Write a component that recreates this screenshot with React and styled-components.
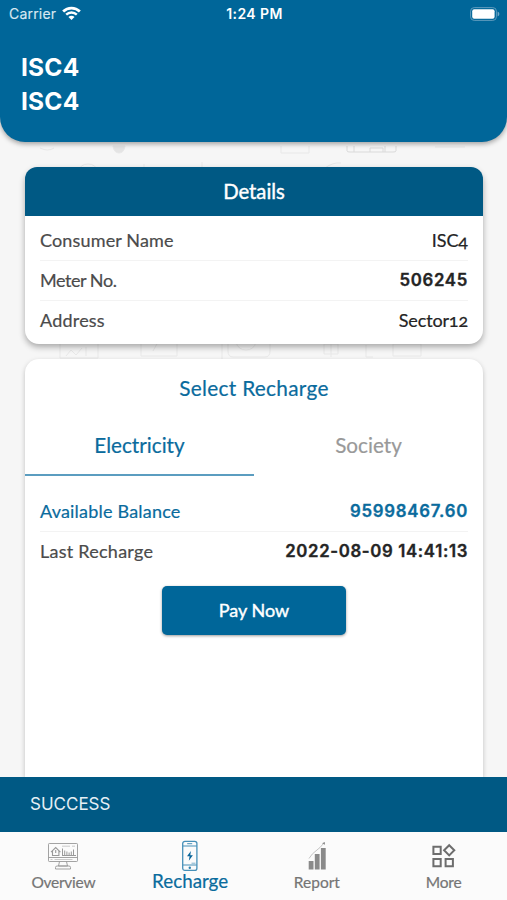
import React from "react";
import styled, { createGlobalStyle } from "styled-components";

const GlobalStyle = createGlobalStyle`
  * {
    box-sizing: border-box;
  }

  body {
    margin: 0;
    font-family: Lato, "Open Sans", sans-serif;
    font-variant-numeric: oldstyle-nums;
    background: #f6f6f6;
  }
`;

const details = [
  { label: "Consumer Name", value: "ISC4", labelTrack: 0.15, valueTrack: -0.1 },
  { label: "Meter No.", value: "506245", numeric: true, labelTrack: -0.45, valueTrack: 0.7 },
  { label: "Address", value: "Sector12", labelTrack: 0.2, valueTrack: -0.15 },
];

const WifiIcon = () => (
  <svg width="19" height="15" viewBox="0 0 20 15" fill="none" stroke="#fff">
    <path d="M1.2 5.4a12.6 12.6 0 0 1 17.6 0" strokeWidth="2.9" />
    <path d="M4.4 8.7a8 8 0 0 1 11.2 0" strokeWidth="2.5" />
    <path d="M10 14.4 6.8 11.2a4.5 4.5 0 0 1 6.4 0Z" fill="#fff" stroke="none" />
  </svg>
);

const BatteryIcon = () => (
  <svg width="30" height="14" viewBox="0 0 30 14">
    <rect x="0.6" y="0.6" width="25.8" height="12.8" rx="3.6" fill="none" stroke="#5e9bbd" strokeWidth="1" />
    <rect x="2.2" y="2.2" width="22.4" height="9.6" rx="2" fill="#fff" />
    <path d="M27.6 4.6q1.8.8 1.8 2.4t-1.8 2.4Z" fill="#73a8c6" />
  </svg>
);

const OverviewIcon = () => (
  <svg width="32" height="28" viewBox="0 0 32 28" fill="none" stroke="#999" strokeWidth="0.9">
    <rect x="1.5" y="1.5" width="29" height="18" rx="0.8" />
    <path d="M1.5 15.5h29M12.5 19.5l-1 4.5h9l-1-4.5M8.5 27v-1.6q0-1.4 1.5-1.4h12q1.5 0 1.5 1.4V27Z" />
    <path d="M4 10.2 8.7 5.5l4.7 4.7M5.5 9v4.5h6.4V9M8.7 8v3" strokeWidth="1.1" />
    <path d="M15.5 13.5v-7m2.2 7v-5m2.2 5v-4m2.2 4v-3m2.2 3v-4m2.2 4V7.5M15 13.5h14" strokeWidth="1" />
    <path d="M15 4.2h8M25 4.2h3M3.5 17.5h2M7.5 17.5h18" strokeWidth="0.5" />
  </svg>
);

const RechargeIcon = () => (
  <svg width="18" height="32" viewBox="0 0 18 32" fill="none" stroke="#4790b8">
    <rect x="1.7" y="1.4" width="14.2" height="29" rx="2.2" strokeWidth="1.3" />
    <path d="M1.8 6h14M1.8 25h14" strokeWidth="1.2" />
    <path d="M6.2 3.7h5" strokeWidth="1" />
    <path d="M10.5 23.2h4" strokeWidth="0.7" />
    <circle cx="8.8" cy="27.7" r="1.2" fill="#277fad" stroke="none" />
    <path d="M9.9 11 6 16.2h2.6l-.8 4.6 4.1-5.6H9.3Z" fill="#07649a" stroke="none" />
  </svg>
);

const ReportIcon = () => (
  <svg width="20" height="30" viewBox="0 0 20 30" fill="#8a8a8a">
    <path d="M1.7 20h4.8v8.5H1.7ZM7.8 13h4.8v15.5H7.8ZM13.9 7h4.8v21.5h-4.8Z" />
    <path d="M2 17.5Q5 12.5 9 9.8T16.8 2.2" fill="none" stroke="#aaa" strokeWidth="0.7" />
    <path d="m15 2.2 2.8-1.2.2 2.8Z" />
  </svg>
);

const MoreIcon = () => (
  <svg width="26" height="26" viewBox="0 0 26 26" fill="none" stroke="#6d6d6d" strokeWidth="2">
    <path d="M2.4 3.7h7.3V11H2.4ZM2.4 15.9h7.3v7.3H2.4ZM14.6 15.9h7.3v7.3h-7.3ZM18.2 2.2l5.1 5.1-5.1 5.1-5.1-5.1Z" />
  </svg>
);

// Faint household line art behind the cards
const Doodles = () => (
  <DoodleSvg width="507" height="240" viewBox="0 0 507 240" fill="none" stroke="#e8e8e8">
    <path d="M40 6q8 4 14 0M78 30q2-8 10-8t10 8M144 22v10M202 20v14M281 4v7h28V4M325 26q8-6 16-5M435 5h30" />
    <path d="M113 4h12q-1 7-6 7t-6-7Z" fill="#e4e4e4" />
    <path d="M347 4v5q0 1 3 1h43q3 0 3-1V4M354 4v6M385 4v6M370 10V6h13v4" stroke="#dadada" />
    <path d="M60 200v16h38v-16M66 214l5-6 5 5 6-7M86 205v9M141 200v14h36v-14M158 200l-5 9M222 200v18M228 200v9q0 6 5 6h32q5 0 5-6v-9M236 200q2 8 10 8t10-8M324 202h14v10h-14ZM331 202v13M366 203v12h7M393 202v12h28v-12Z" />
  </DoodleSvg>
);

const tabs = [
  { label: "Overview", icon: <OverviewIcon />, track: -0.25 },
  { label: "Recharge", icon: <RechargeIcon />, active: true, track: 0 },
  { label: "Report", icon: <ReportIcon />, track: 0 },
  { label: "More", icon: <MoreIcon />, track: -0.2 },
];

const App = () => {
  return (
    <Screen>
      <GlobalStyle />
      <Header>
        <StatusBar>
          <Carrier>
            Carrier <WifiIcon />
          </Carrier>
          <Clock>1:24 PM</Clock>
          <Battery>
            <BatteryIcon />
          </Battery>
        </StatusBar>
        <Account>
          <span>ISC4</span>
          <span>ISC4</span>
        </Account>
      </Header>
      <Content>
        <Doodles />
        <DetailsCard>
          <CardHeader>Details</CardHeader>
          <Rows>
            {details.map((row) => (
              <Row key={row.label}>
                <Label $track={row.labelTrack}>{row.label}</Label>
                <Value $numeric={row.numeric} $track={row.valueTrack}>
                  {row.value}
                </Value>
              </Row>
            ))}
          </Rows>
        </DetailsCard>
        <RechargeCard>
          <CardTitle>Select Recharge</CardTitle>
          <Tabs>
            <Tab $active>Electricity</Tab>
            <Tab>Society</Tab>
          </Tabs>
          <BalanceRows>
            <Row>
              <Label $accent $track={0.2}>
                Available Balance
              </Label>
              <Value $numeric $accent $track={0.75}>
                95998467.60
              </Value>
            </Row>
            <Row>
              <Label $track={0.25}>Last Recharge</Label>
              <Value $numeric $track={0.65}>
                2022-08-09 14:41:13
              </Value>
            </Row>
          </BalanceRows>
          <PayButton>Pay Now</PayButton>
        </RechargeCard>
      </Content>
      <Toast>SUCCESS</Toast>
      <NavBar>
        {tabs.map((tab) => (
          <NavItem key={tab.label}>
            <NavIcon>{tab.icon}</NavIcon>
            <NavLabel $active={tab.active} $track={tab.track}>
              {tab.label}
            </NavLabel>
          </NavItem>
        ))}
      </NavBar>
    </Screen>
  );
};

const Screen = styled.div`
  width: 507px;
  height: 900px;
  display: flex;
  flex-direction: column;
  overflow: hidden;
  background: #f6f6f6;
  -webkit-text-stroke: 0.2px currentColor;
`;

const Header = styled.header`
  flex: none;
  height: 142px;
  background: #006699;
  border-radius: 0 0 25px 25px;
  color: #fff;
  position: relative;
  z-index: 1;
  box-shadow: 0 2px 5px rgba(0, 0, 0, 0.35);
  font-family: Inter, sans-serif;
  -webkit-text-stroke: 0;
`;

const StatusBar = styled.div`
  display: grid;
  grid-template-columns: 1fr auto 1fr;
  align-items: center;
  height: 27px;
  padding: 0 7px 0 9px;
`;

const Carrier = styled.div`
  display: flex;
  align-items: center;
  gap: 6px;
  font-size: 14px;
  letter-spacing: 0.2px;
  color: #d8e8f1;
  -webkit-text-stroke: 0.15px currentColor;
`;

const Clock = styled.div`
  font-size: 14px;
  font-weight: 600;
  letter-spacing: 0.4px;
`;

const Battery = styled.div`
  display: flex;
  justify-content: flex-end;
`;

const Account = styled.div`
  display: flex;
  flex-direction: column;
  padding: 23px 21px 0;
  font-size: 24.5px;
  line-height: 34px;
  font-weight: 700;
  letter-spacing: 0.2px;
`;

const Content = styled.main`
  flex: 1;
  min-height: 0;
  overflow: hidden;
  display: flex;
  flex-direction: column;
  gap: 15px;
  padding: 25px 24px 0 25px;
  position: relative;
`;

const DoodleSvg = styled.svg`
  position: absolute;
  top: 0;
  left: 0;
`;

const Card = styled.section`
  position: relative;
  background: #fff;
  border-radius: 14px;
`;

const DetailsCard = styled(Card)`
  flex: none;
  height: 177px;
  box-shadow: 0 3px 6px rgba(0, 0, 0, 0.32);
`;

const CardHeader = styled.h2`
  margin: 0;
  height: 49px;
  border-radius: 12px 12px 0 0;
  background: #005984;
  color: #fff;
  font-size: 20.3px;
  font-weight: 400;
  line-height: 49px;
  text-align: center;
  -webkit-text-stroke: 0.4px currentColor;
`;

const Rows = styled.div`
  padding: 4px 15px 0;
`;

const BalanceRows = styled(Rows)`
  padding-top: 15px;
`;

const Row = styled.div`
  display: flex;
  align-items: center;
  justify-content: space-between;
  height: 40px;

  & + & {
    border-top: 1px solid #f3f3f3;
    padding-bottom: 1px;
  }
`;

const Label = styled.span`
  font-size: 18px;
  letter-spacing: ${(p) => p.$track ?? 0}px;
  color: ${(p) => (p.$accent ? "#0a6b9d" : "#4b4b4b")};
`;

const Value = styled.span`
  font-family: ${(p) => (p.$numeric ? "Inter, sans-serif" : "inherit")};
  font-size: ${(p) => (p.$numeric ? 16.8 : 18)}px;
  font-weight: ${(p) => (p.$numeric ? 600 : 400)};
  letter-spacing: ${(p) => p.$track ?? 0}px;
  color: ${(p) => (p.$accent ? "#0a6b9d" : "#242424")};
  -webkit-text-stroke: ${(p) => (p.$numeric ? 0.35 : 0.2)}px currentColor;
`;

const RechargeCard = styled(Card)`
  flex: 1;
  display: flex;
  flex-direction: column;
  border-radius: 14px 14px 0 0;
  box-shadow: 0 2px 5px rgba(0, 0, 0, 0.22);
`;

const CardTitle = styled.h2`
  margin: 0;
  height: 58px;
  line-height: 58px;
  font-size: 20.8px;
  font-weight: 400;
  letter-spacing: 0.3px;
  color: #0a6b9d;
  text-align: center;
`;

const Tabs = styled.div`
  display: flex;
  height: 59px;
`;

const Tab = styled.div`
  flex: 1;
  line-height: 57px;
  font-size: 20.7px;
  text-align: center;
  color: ${(p) => (p.$active ? "#0a6b9d" : "#999")};
  border-bottom: 2px solid ${(p) => (p.$active ? "#5b9dc0" : "transparent")};
`;

const PayButton = styled.button`
  align-self: center;
  width: 184px;
  height: 49px;
  margin-top: 15px;
  padding-bottom: 2px;
  border: 0;
  border-radius: 5px;
  background: #006699;
  color: #fff;
  font-family: inherit;
  font-size: 18px;
  -webkit-text-stroke: 0.4px currentColor;
  box-shadow: 0 1px 3px rgba(0, 0, 0, 0.4);
`;

const Toast = styled.div`
  flex: none;
  height: 55px;
  padding-left: 30px;
  background: #005984;
  color: #e4eff5;
  font-family: Inter, sans-serif;
  font-size: 17px;
  line-height: 54px;
  -webkit-text-stroke: 0;
  position: relative;
`;

const NavBar = styled.nav`
  flex: none;
  height: 68px;
  display: grid;
  grid-template-columns: repeat(4, 1fr);
  background: #fbfbfb;
`;

const NavItem = styled.div`
  display: flex;
  flex-direction: column;
  align-items: center;
  padding-top: 8px;
`;

const NavIcon = styled.div`
  height: 32px;
  display: flex;
  align-items: center;
`;

const NavLabel = styled.span`
  font-size: ${(p) => (p.$active ? 18.8 : 15.5)}px;
  line-height: ${(p) => (p.$active ? 17 : 20)}px;
  letter-spacing: ${(p) => p.$track}px;
  color: ${(p) => (p.$active ? "#0a6b9d" : "#757575")};
`;

export default App;
